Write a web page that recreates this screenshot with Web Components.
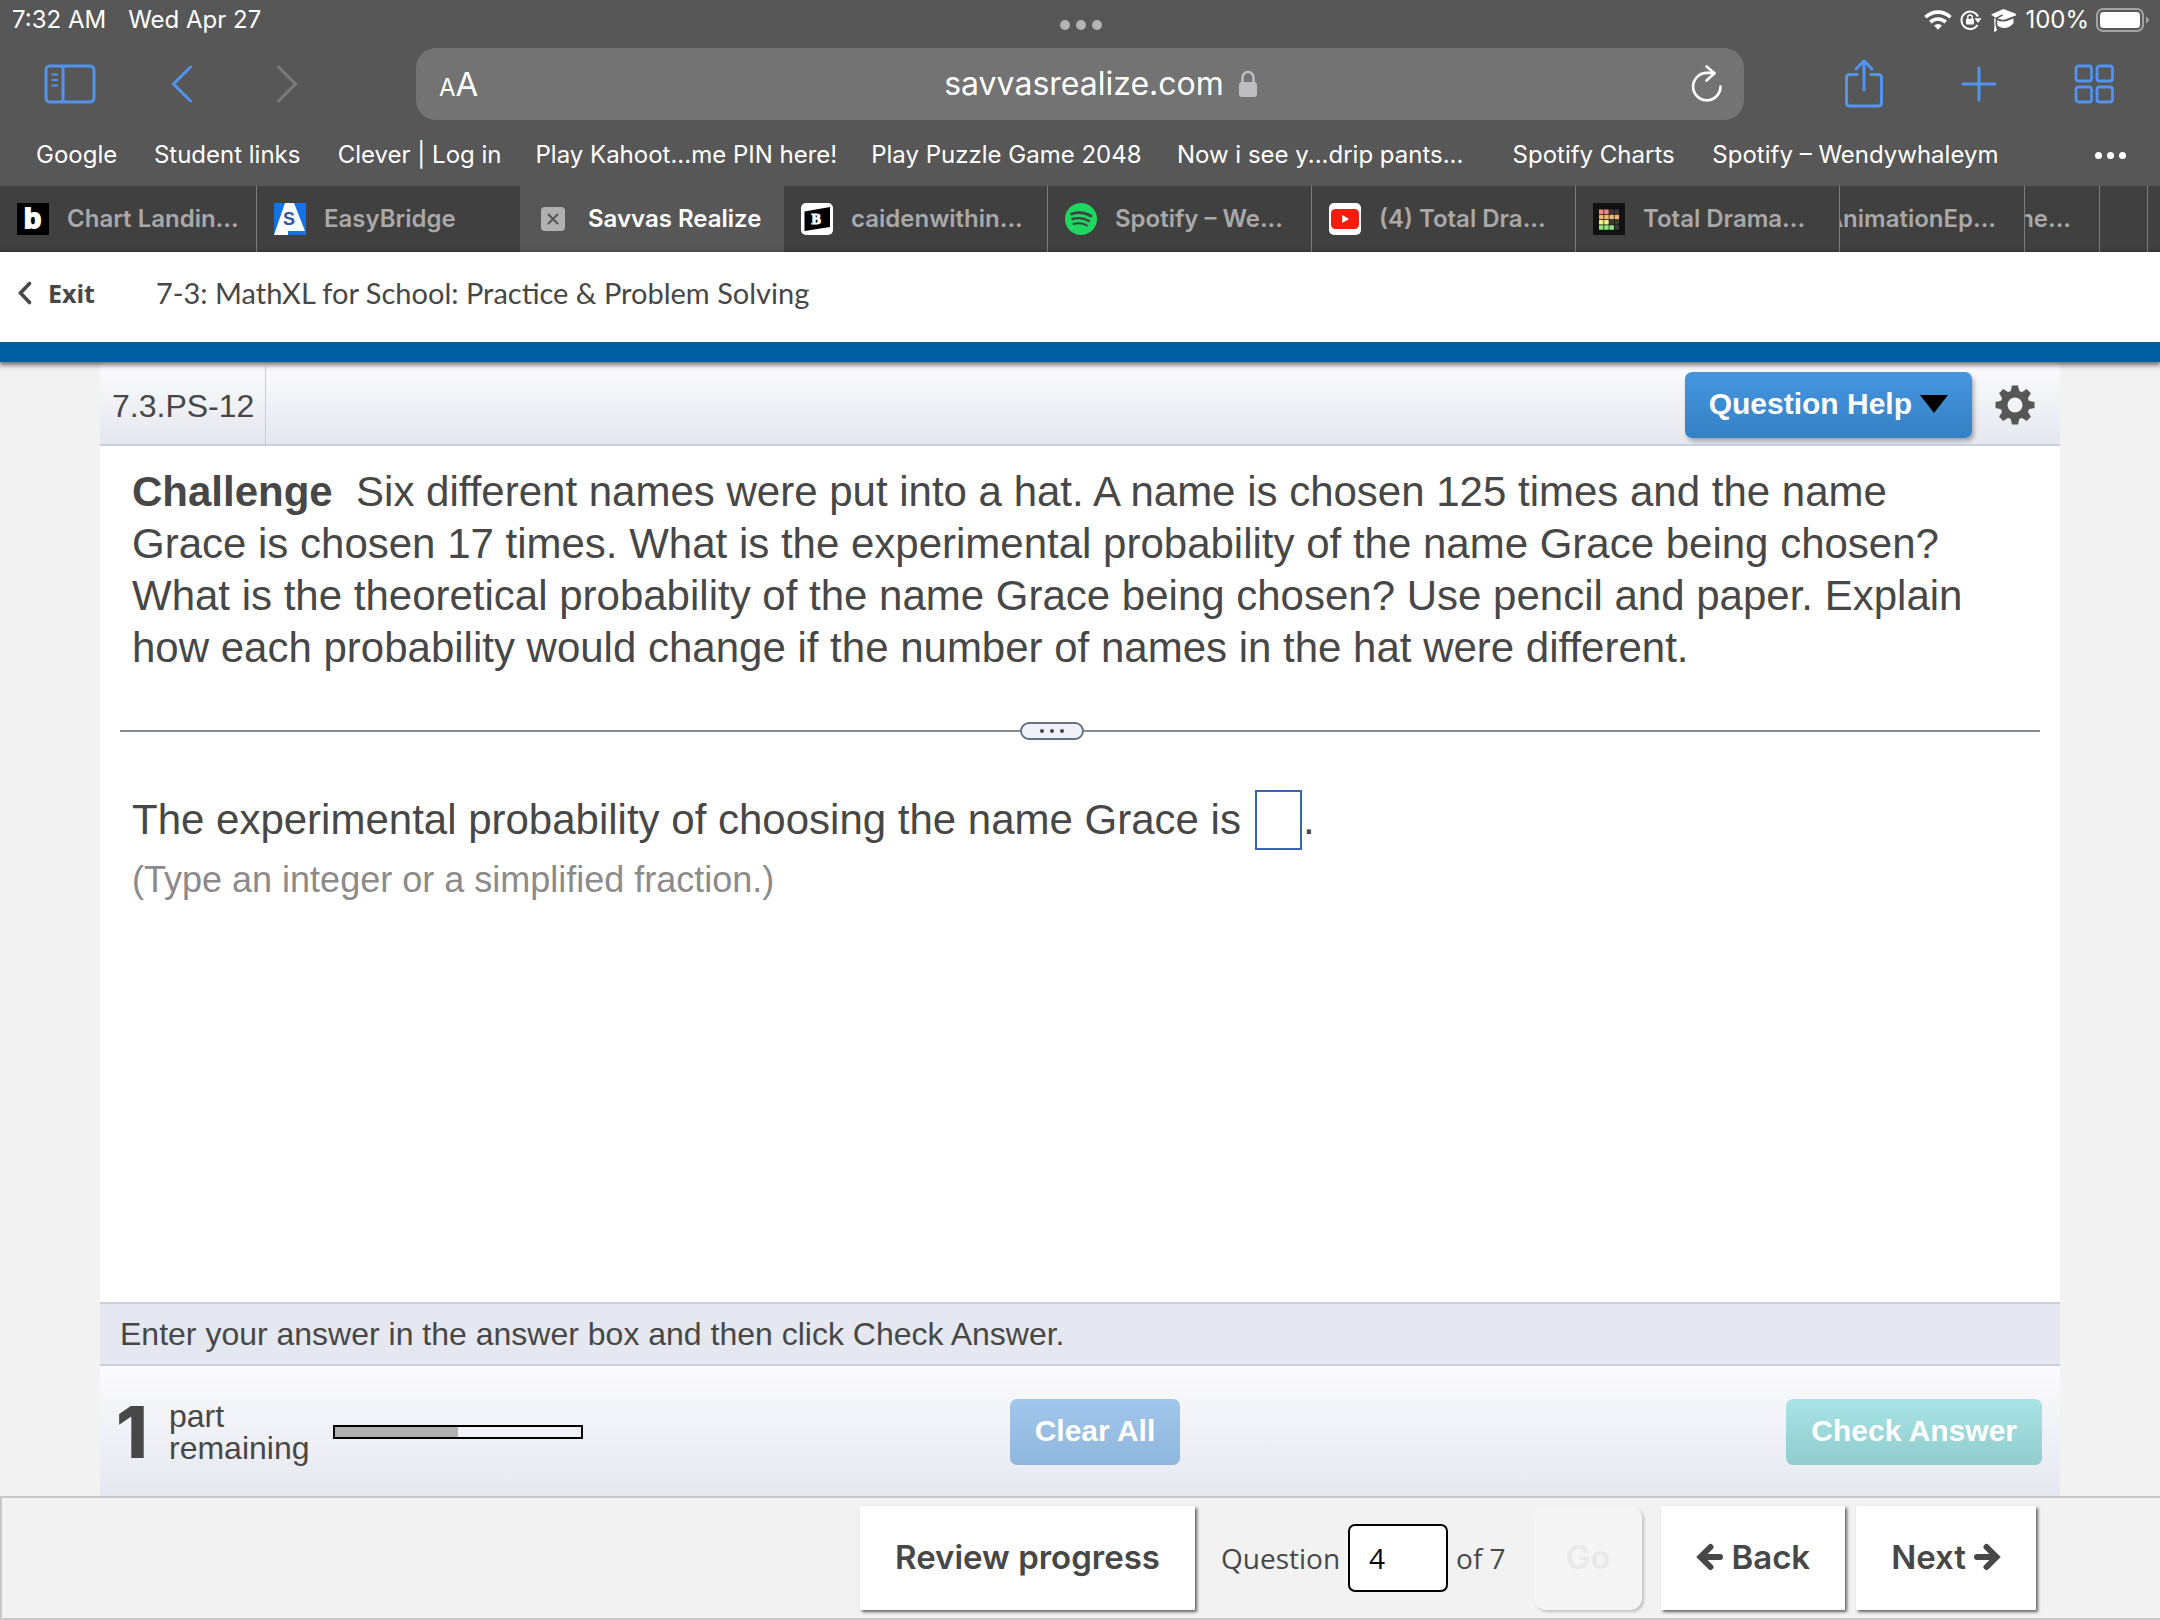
<!DOCTYPE html>
<html lang="en">
<head>
<meta charset="utf-8">
<meta name="viewport" content="width=device-width, initial-scale=1">
<title>7-3: MathXL for School: Practice &amp; Problem Solving</title>
<style>
  html, body { margin: 0; }
  body {
    min-height: 100vh;
    display: flex;
    flex-direction: column;
    background: #f2f2f2;
    color: #474747;
    font-family: "Liberation Sans", Arial, sans-serif;
  }
  exercise-panel { flex: 1; }
</style>
</head>
<body>
<status-bar></status-bar>
<browser-toolbar></browser-toolbar>
<bookmarks-bar></bookmarks-bar>
<tab-strip></tab-strip>
<lesson-header></lesson-header>
<exercise-panel></exercise-panel>
<lesson-nav></lesson-nav>

<script>
const define = (name, markup) => {
  const template = document.createElement('template');
  template.innerHTML = markup;
  customElements.define(name, class extends HTMLElement {
    constructor() {
      super();
      this.attachShadow({ mode: 'open' }).append(template.content.cloneNode(true));
    }
  });
};

define('status-bar', `
<style>
  :host { display: grid; grid-template-columns: 1fr auto 1fr; align-items: center; height: 40px; padding: 0 10px 0 12px;
    background: #575757; color: #fff; font: 400 24px/40px Inter, sans-serif; }
  .left { display: flex; gap: 22px; }
  .dots { display: flex; gap: 6px; padding-top: 10px; }
  .dots i { width: 10px; height: 10px; border-radius: 50%; background: #b4b4b4; }
  .right { display: flex; justify-content: flex-end; align-items: center; gap: 7px; }
  svg { display: block; flex: none; }
</style>
<div class="left"><span>7:32 AM</span><span>Wed Apr 27</span></div>
<div class="dots"><i></i><i></i><i></i></div>
<div class="right">
  <svg width="28" height="20" viewBox="0 0 28 20" fill="none" stroke="#fff" stroke-width="3.6"><path d="M1.5 7.3C8.500.4 19.500.4 26.500 7.300"/><path d="M6.300 12.100C10.700 8 17.300 8 21.700 12.100"/><path d="M14 19.800 10 15.600Q14 12.200 18 15.600Z" fill="#fff" stroke="none"/></svg>
  <svg width="24" height="20" viewBox="0 0 24 20"><path d="M18.500 15A8.700 8.700 0 1 1 19 6.500" fill="none" stroke="#fff" stroke-width="2"/><path d="M15.500 8.300H22.500L19 13Z" fill="#fff"/><rect x="7" y="8.800" width="8" height="5.700" rx="1" fill="#fff"/><path d="M8.700 9V7.300a2.300 2.300 0 0 1 4.600 0V9" fill="none" stroke="#fff" stroke-width="1.300"/></svg>
  <svg width="28" height="24" viewBox="0 0 28 24" fill="#fff"><path d="M1 6.500 13.500 1 26.500 6Q26 8 23 8.500L15 11.500Q11 12 7.500 10.500L13 7.500 12.500 6.300 5.500 9.800Z"/><path d="M7 12.200Q12 14.500 17 13L23.500 10.500V15Q20 20 14 20 9.500 19.800 7.500 17.500Z"/><path d="M4 10.500H5.600V17L7 22Q5.500 24.500 4 23.500L4.500 17Z"/></svg>
  <span>100%</span>
  <svg width="54" height="24" viewBox="0 0 54 24"><rect x="1" y="1" width="46" height="22" rx="6" fill="none" stroke="#a3a3a3" stroke-width="2"/><rect x="4" y="4" width="40" height="16" rx="3.500" fill="#fff"/><path d="M50 8.500Q53 10 53 12T50 15.500Z" fill="#a3a3a3"/></svg>
</div>`);

define('browser-toolbar', `
<style>
  :host { display: grid; grid-template-columns: 416fr 1328fr 416fr; align-items: center; height: 88px;
    background: #575757; color: #fff; font-family: Inter, sans-serif; }
  button { all: unset; display: flex; align-items: center; justify-content: center; cursor: pointer; }
  svg { display: block; flex: none; }
  .left { display: flex; align-items: center; padding-left: 44px; gap: 75px; }
  .right { display: flex; align-items: center; justify-content: flex-end; padding-right: 46px; gap: 77px; }
  .left .back { margin-right: 8px; }
  .pill { display: grid; grid-template-columns: 1fr auto 1fr; align-items: center; height: 72px; padding: 0 21px 0 23px; border-radius: 20px; background: #737373; }
  .aa { justify-self: start; align-items: baseline; font-size: 33px; }
  .aa small { font-size: 24px; }
  .reload { justify-self: end; }
  .address { display: flex; align-items: center; gap: 14px; padding-left: 40px; font-size: 32px; line-height: 40px; }
</style>
<div class="left">
  <button aria-label="Sidebar"><svg width="52" height="40" viewBox="0 0 52 40" fill="none" stroke="#5294ef" stroke-width="3"><rect x="2" y="2" width="48" height="36" rx="4"/><path d="M19 2V38"/><path d="M7.500 10.500H14M7.500 16H14M7.500 21.500H14" stroke-width="2"/></svg></button>
  <button class="back" aria-label="Back"><svg width="22" height="38" viewBox="0 0 22 38" fill="none" stroke="#5294ef" stroke-width="3" stroke-linecap="round"><path d="M19.500 2 2.500 19 19.500 36"/></svg></button>
  <button aria-label="Forward"><svg width="22" height="38" viewBox="0 0 22 38" fill="none" stroke="#7a7a7a" stroke-width="3" stroke-linecap="round"><path d="M2.500 2 19.500 19 2.500 36"/></svg></button>
</div>
<div class="pill">
  <button class="aa"><small>A</small>A</button>
  <div class="address"><span>savvasrealize.com</span><svg width="20" height="28" viewBox="0 0 20 28"><path d="M4.500 13V7.500a5.500 5.500 0 0 1 11 0V13" fill="none" stroke="#bdbdc2" stroke-width="2.500"/><rect x="1" y="12" width="18" height="15" rx="3" fill="#bdbdc2"/></svg></div>
  <button class="reload" aria-label="Reload"><svg width="32" height="38" viewBox="0 0 32 38" fill="none" stroke="#fff" stroke-width="2.600" stroke-linecap="round" stroke-linejoin="round"><path d="M29.500 21.500A13.700 13.700 0 1 1 16 7.900H23"/><path d="M15.500 1.500 23.500 8.200 15.500 15.500"/></svg></button>
</div>
<div class="right">
  <button aria-label="Share"><svg width="40" height="50" viewBox="0 0 40 50" fill="none" stroke="#5294ef" stroke-width="3" stroke-linecap="round" stroke-linejoin="round"><path d="M13 15.500H6Q2.500 15.500 2.500 19V43.500Q2.500 47 6 47H34Q37.500 47 37.500 43.500V19Q37.500 15.500 34 15.500H27"/><path d="M20 31V2.500M12 10 20 2 28 10"/></svg></button>
  <button aria-label="New tab"><svg width="36" height="36" viewBox="0 0 36 36" stroke="#5294ef" stroke-width="3" stroke-linecap="round"><path d="M18 2V34M2 18H34"/></svg></button>
  <button aria-label="All tabs"><svg width="40" height="40" viewBox="0 0 40 40" fill="none" stroke="#5294ef" stroke-width="2.800"><rect x="2" y="2" width="15.500" height="15" rx="2.500"/><rect x="23" y="2" width="15.500" height="15" rx="2.500"/><rect x="2" y="23" width="15.500" height="15" rx="2.500"/><rect x="23" y="23" width="15.500" height="15" rx="2.500"/></svg></button>
</div>`);

define('bookmarks-bar', `
<style>
  :host { display: block; background: #575757; }
  nav { display: grid; box-sizing: border-box; grid-template-columns: 118fr 184fr 198fr 336fr 306fr 336fr 200fr 383fr auto; align-items: center; height: 58px; padding: 0 34px 4px 36px; }
  a { color: #fff; text-decoration: none; white-space: nowrap; font: 400 24px/52px Inter, sans-serif; }
  button { all: unset; display: flex; gap: 5px; }
  i { width: 7px; height: 7px; border-radius: 50%; background: #fff; }
</style>
<nav>
  <a href="#">Google</a><a href="#">Student links</a><a href="#">Clever | Log in</a><a href="#">Play Kahoot...me PIN here!</a><a href="#">Play Puzzle Game 2048</a><a href="#">Now i see y...drip pants...</a><a href="#">Spotify Charts</a><a href="#">Spotify – Wendywhaleym</a>
  <button aria-label="More bookmarks"><i></i><i></i><i></i></button>
</nav>`);

define('browser-tab', `
<style>
  :host { display: flex; align-items: center; box-sizing: border-box; min-width: 0; overflow: hidden; gap: 18px; padding-left: 17px;
    background: #404040; color: #a9a9a9; border-right: 1px solid #7c7c7c; font: 600 24px/66px Inter, sans-serif; white-space: nowrap; }
  :host([active]) { background: #575757; color: #fff; gap: 22px; padding-left: 20px; border-color: transparent; }
  :host([plain]) { border-color: transparent; }
  :host([stacked]) { padding: 0 28px 0 0; justify-content: flex-end; }
  :host([empty]) { padding: 0; }
  ::slotted(svg) { display: block; flex: none; }
</style>
<slot name="icon"></slot><slot></slot>`);

define('tab-strip', `
<style>
  :host { display: grid; grid-template-columns: 257fr 263fr 264fr 264fr 264fr 264fr 264fr 185fr 75fr 48fr 12fr; height: 66px; background: #404040; }
  text { font-family: "Liberation Sans", sans-serif; font-weight: 700; }
</style>
<browser-tab><svg slot="icon" width="32" height="32" viewBox="0 0 32 32"><rect width="32" height="32"/><text x="7" y="25" font-size="28" fill="#fff" stroke="#fff" stroke-width="2">b</text></svg>Chart Landin...</browser-tab>
<browser-tab plain><svg slot="icon" width="32" height="32" viewBox="0 0 32 32"><rect width="32" height="32" fill="#1373e6"/><path d="M11 0H20L31 28H14V32H0Z" fill="#fff"/><text x="9" y="22" font-size="18" fill="#3557a5">S</text></svg>EasyBridge</browser-tab>
<browser-tab active><svg slot="icon" width="26" height="26" viewBox="0 0 26 26"><rect x="1" y="1" width="24" height="24" rx="4" fill="#b1b1b1"/><path d="M8 8 18 18M18 8 8 18" stroke="#575757" stroke-width="2.200"/></svg>Savvas Realize</browser-tab>
<browser-tab><svg slot="icon" width="32" height="32" viewBox="0 0 32 32"><rect width="32" height="32" rx="5" fill="#fff"/><path d="M3.500 8.500 29 4V24L3.500 28Z"/><text x="10.500" y="21" font-size="14" fill="#fff" stroke="#fff" style="font-family:'Liberation Serif',serif">B</text></svg>caidenwithin...</browser-tab>
<browser-tab><svg slot="icon" width="32" height="32" viewBox="0 0 32 32"><circle cx="16" cy="16" r="16" fill="#1ed760"/><g fill="none" stroke="#404040" stroke-linecap="round"><path d="M6.500 11Q17 7.500 26 13" stroke-width="2.800"/><path d="M7.500 16Q16.500 13.500 24 18" stroke-width="2.400"/><path d="M8.500 21Q16 19 22 22.500" stroke-width="2"/></g></svg>Spotify – We...</browser-tab>
<browser-tab><svg slot="icon" width="32" height="32" viewBox="0 0 32 32"><rect width="32" height="32" rx="5" fill="#fff"/><rect x="2" y="6" width="28" height="20" rx="4.500" fill="#f61c0d"/><path d="M13.200 12 20 16 13.200 20Z" fill="#fff"/></svg>(4) Total Dra...</browser-tab>
<browser-tab><svg slot="icon" width="32" height="32" viewBox="0 0 32 32"><rect width="32" height="32" fill="#111"/><g><path d="M6 6.500h4.500v4.500H6zM11.200 6.500h4.500v4.500h-4.500z" fill="#ef8a8a"/><path d="M16.400 6.500h4.500v4.500h-4.500zM21.600 6.500h4.500v4.500h-4.500zM16.400 17h4.500v4.500h-4.500zM21.600 17h4.500v4.500h-4.500zM21.600 22.200h4.500v4.500h-4.500z" fill="#3b3b3b"/><path d="M6 11.700h4.500v4.500H6zM11.200 11.700h4.500v4.500h-4.500zM16.400 11.700h4.500v4.500h-4.500zM21.600 11.700h4.500v4.500h-4.500z" fill="#f2b573"/><path d="M6 17h4.500v4.500H6zM11.200 17h4.500v4.500h-4.500z" fill="#f4ee85"/><path d="M6 22.200h4.500v4.500H6zM11.200 22.200h4.500v4.500h-4.500zM16.400 22.200h4.500v4.500h-4.500z" fill="#8fe883"/></g></svg>Total Drama...</browser-tab>
<browser-tab stacked>AnimationEp...</browser-tab>
<browser-tab stacked>he...</browser-tab>
<browser-tab empty></browser-tab>
<browser-tab empty plain></browser-tab>`);

define('lesson-header', `
<style>
  :host { display: block; position: relative; background: #fff; border-bottom: 20px solid #005ea2; box-shadow: 0 2px 5px 1px #00000090; }
  header { display: flex; align-items: center; gap: 61px; height: 90px; box-sizing: border-box; padding: 0 18px 8px; }
  button { all: unset; display: flex; align-items: center; gap: 16px; font: 700 25px/32px "Open Sans", sans-serif; }
  svg { display: block; }
  h1 { margin: 0; font: 400 29px/36px Lato, sans-serif; }
</style>
<header>
  <button><svg width="14" height="24" viewBox="0 0 14 24" fill="none" stroke="#474747" stroke-width="3.600" stroke-linecap="round"><path d="M11.500 2.500 2.500 12 11.500 21.500"/></svg>Exit</button>
  <h1>7-3: MathXL for School: Practice &amp; Problem Solving</h1>
</header>`);

define('action-button', `
<style>
  :host { display: block; --top: #4696df; --bottom: #3480c4; }
  :host([tone=soft]) { --top: #a2c6ec; --bottom: #8fb6dc; }
  :host([tone=mint]) { --top: #a8e3e6; --bottom: #91cdcd; }
  button { display: flex; align-items: center; gap: 8px; height: 66px; margin: 0; padding: 0 25px 3px; border: 0; border-radius: 7px;
    background: linear-gradient(var(--top), var(--bottom)); color: #fff; font: 700 30px/40px "Liberation Sans", Arial, sans-serif; white-space: nowrap; }
  :host([menu]) button { padding: 0 24px 3px; box-shadow: 2px 3px 4px #0000004d; }
</style>
<button><slot></slot></button>`);

define('exercise-panel', `
<style>
  :host { display: flex; flex-direction: column; margin: 0 100px; background: #fff; }
  .head { display: flex; align-items: center; box-sizing: border-box; height: 84px; padding: 4px 25px 0 0; gap: 23px; background: linear-gradient(#fcfcfe, #e5e7ee); border-bottom: 2px solid #cad0db; }
  .code { display: flex; align-items: center; height: 76px; align-self: flex-start; margin-right: auto; padding: 2px 11px 0 12px; border-right: 1px solid #c6cbdf; font-size: 32px; }
  svg { display: block; }
  .question { margin: 0; padding: 20px 74px 0 32px; font-size: 42px; line-height: 52px; }
  .divider { display: grid; grid-template-columns: 900fr 64px 956fr; align-items: center; margin: 48px 20px 0; }
  .divider i { height: 2px; background: #868b90; }
  .divider button { display: flex; align-items: center; justify-content: center; gap: 6px; height: 18px; padding: 0; border: 2px solid #66717f; border-radius: 9px; background: #eff3f9; }
  .divider b { width: 4px; height: 4px; border-radius: 50%; background: #474747; }
  .answer { flex: 1; padding: 50px 32px 0; }
  .row { display: flex; align-items: center; font-size: 42px; line-height: 56px; }
  .row label { margin-right: 14px; }
  .row input { box-sizing: border-box; width: 47px; height: 60px; margin: 0 1px 0 0; padding: 0; border: 2px solid #3b64b0; border-radius: 0; background: #fff; font: inherit; text-align: center; }
  .hint { margin: 8px 0 0; color: #8b8b8b; font-size: 36px; line-height: 44px; }
  .tip { padding: 0 20px; border: solid #cbced9; border-width: 2px 0; background: #e5e8f0; font-size: 32px; line-height: 60px; }
  .foot { display: grid; grid-template-columns: 1fr auto 1fr; align-items: center; box-sizing: border-box; height: 130px; padding: 2px 18px 0 16px; background: linear-gradient(#fbfbfd, #e6e8f1); }
  .progress { display: flex; align-items: center; }
  .count { width: 53px; font: 800 72px/80px Inter, sans-serif; }
  .remaining { font-size: 32px; line-height: 32px; width: 164px; }
  .bar { box-sizing: border-box; width: 250px; height: 14px; border: 2px solid #000; background: linear-gradient(90deg, #b0b0b0 50%, #f2f3f8 50%); }
  .middle { margin-left: 32px; }
  .end { justify-self: end; }
  .gear { all: unset; }
</style>
<div class="head">
  <div class="code">7.3.PS-12</div>
  <action-button menu>Question Help<svg width="28" height="18" viewBox="0 0 28 18"><path d="M0 0H28L14 18Z"/></svg></action-button>
  <button class="gear" aria-label="Settings"><svg width="40" height="40" viewBox="-20 -20 40 40"><g fill="#575757"><circle r="14.500"/><path d="M-4.500-13 -3-19.500H3L4.500-13V13L3 19.500H-3L-4.500 13Z"/><path d="M-4.500-13 -3-19.500H3L4.500-13V13L3 19.500H-3L-4.500 13Z" transform="rotate(45)"/><path d="M-4.500-13 -3-19.500H3L4.500-13V13L3 19.500H-3L-4.500 13Z" transform="rotate(90)"/><path d="M-4.500-13 -3-19.500H3L4.500-13V13L3 19.500H-3L-4.500 13Z" transform="rotate(135)"/></g><circle r="7.500" fill="#f2f3f7"/></svg></button>
</div>
<p class="question"><strong>Challenge</strong>&nbsp; Six different names were put into a hat. A name is chosen 125 times and the name Grace is chosen 17 times. What is the experimental probability of the name Grace being chosen? What is the theoretical probability of the name Grace being chosen? Use pencil and paper. Explain how each probability would change if the number of names in the hat were different.</p>
<div class="divider"><i></i><button aria-label="Resize"><b></b><b></b><b></b></button><i></i></div>
<div class="answer">
  <div class="row"><label for="answer">The experimental probability of choosing the name Grace is</label><input id="answer" type="text"><span>.</span></div>
  <p class="hint">(Type an integer or a simplified fraction.)</p>
</div>
<div class="tip">Enter your answer in the answer box and then click Check Answer.</div>
<div class="foot">
  <div class="progress"><div class="count">1</div><div class="remaining">part<br>remaining</div><div class="bar" role="progressbar" aria-valuenow="50" aria-label="Progress"></div></div>
  <action-button class="middle" tone="soft">Clear All</action-button>
  <action-button class="end" tone="mint">Check Answer</action-button>
</div>`);

define('nav-button', `
<style>
  :host { display: block; }
  button { display: flex; align-items: center; justify-content: center; gap: 8px; height: 104px; margin: 0; padding: 0 35px 2px; border: 0;
    background: #fff; color: #474747; box-shadow: 2px 2px 3px #00000099; font: 600 33px/44px Inter, sans-serif; white-space: nowrap; }
  :host([off]) button { padding: 0 32px 2px; background: #f5f5f5; color: #e9e9e9; border-radius: 12px; box-shadow: 2px 2px 3px #00000033; }
</style>
<button><slot></slot></button>`);

define('lesson-nav', `
<style>
  :host { display: flex; justify-content: flex-end; align-items: center; padding: 8px 124px 8px 0; border: solid #c8c8c8; border-width: 2px 0 2px 2px; background: #f2f2f2; }
  .jump { display: flex; align-items: center; gap: 8px; margin: 0 28px 0 26px; font: 400 28px/40px "Open Sans", sans-serif; }
  input { box-sizing: border-box; width: 100px; height: 68px; margin: 0; padding: 0 19px; border: 2px solid #000; border-radius: 7px; background: #fff; color: #000; font: inherit; }
  nav-button + nav-button { margin-left: 11px; }
  nav-button[off] + nav-button { margin-left: 19px; }
  svg { display: block; }
</style>
<nav-button>Review progress</nav-button>
<div class="jump"><label for="number">Question</label><input id="number" type="text" value="4"><span>of 7</span></div>
<nav-button off>Go</nav-button>
<nav-button><svg width="27" height="28" viewBox="0 0 27 28" fill="none" stroke="#474747" stroke-width="6" stroke-linecap="round"><path d="M14.500 4 4.500 14 14.500 24M6 14H24"/></svg>Back</nav-button>
<nav-button>Next<svg width="27" height="28" viewBox="0 0 27 28" fill="none" stroke="#474747" stroke-width="6" stroke-linecap="round"><path d="M12.500 4 22.500 14 12.500 24M21 14H3"/></svg></nav-button>`);
</script>
</body>
</html>
